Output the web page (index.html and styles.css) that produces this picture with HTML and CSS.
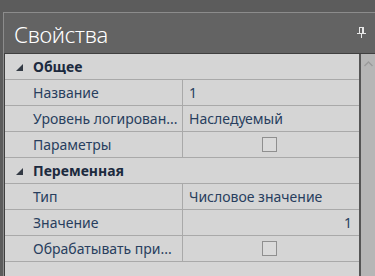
FILE: index.html
```html
<!DOCTYPE html>
<html lang="ru">
<head>
<meta charset="utf-8">
<link rel="stylesheet" href="styles.css">
</head>
<body>
<div class="panel">
  <div class="header">
    <span class="title">Свойства</span>
    <svg class="pin" width="9" height="11" viewBox="0 0 9 11">
      <rect x="2" y="0" width="5" height="1" fill="#e8e8e8"/>
      <rect x="2" y="1" width="1" height="5" fill="#e8e8e8"/>
      <rect x="5" y="1" width="2" height="5" fill="#e8e8e8"/>
      <rect x="0" y="6" width="9" height="1" fill="#e8e8e8"/>
      <rect x="4" y="7" width="1" height="4" fill="#e8e8e8"/>
    </svg>
  </div>
  <div class="body">
    <div class="grid">
      <div class="cat"><span class="tri"></span>Общее</div>
      <div class="row"><div class="name">Название</div><div class="val">1</div></div>
      <div class="row"><div class="name">Уровень логирован...</div><div class="val">Наследуемый</div></div>
      <div class="row"><div class="name">Параметры</div><div class="val center"><span class="chk"></span></div></div>
      <div class="cat"><span class="tri"></span>Переменная</div>
      <div class="row"><div class="name">Тип</div><div class="val">Числовое значение</div></div>
      <div class="row"><div class="name">Значение</div><div class="val right">1</div></div>
      <div class="row"><div class="name">Обрабатывать при...</div><div class="val center"><span class="chk"></span></div></div>
    </div>
    <div class="scroll">
      <svg class="up" width="9" height="6" viewBox="0 0 9 6"><path d="M0.5 5 L4.5 1 L8.5 5" fill="none" stroke="#9a9a9a" stroke-width="1.4"/></svg>
    </div>
  </div>
</div>
</body>
</html>
```
FILE: styles.css
```css
html, body {
  margin: 0;
  padding: 0;
  background: #5c5c5c;
  height: 276px;
  overflow: hidden;
}
.panel {
  margin: 12px 0 0 3px;
  border-top: 1px solid #8c8c8c;
  border-left: 1px solid #8c8c8c;
  background: #636363;
  height: 263px;
  display: flex;
  flex-direction: column;
  font-family: "Noto Sans", "Open Sans", sans-serif;
}
.header {
  height: 40px;
  display: flex;
  align-items: center;
  justify-content: space-between;
  padding: 0 9px 0 10px;
  border-bottom: 1px solid #404040;
}
.title {
  color: #ffffff;
  font-size: 22px;
  font-weight: 300;
  letter-spacing: -0.3px;
  margin-top: 2px;
}
.pin {
  display: block;
  margin-top: -1px;
}
.body {
  flex: 1;
  display: flex;
  border-left: 1px solid #3e3e3e;
}
.grid {
  flex: 1;
  background: #d5d5d5;
  border-right: 2px solid #555555;
}
.scroll {
  width: 14px;
  background: #b6b6b6;
  display: flex;
  justify-content: center;
}
.up {
  margin-top: 7px;
}
.cat {
  height: 25px;
  border-bottom: 1px solid #a9a9a9;
  display: flex;
  align-items: center;
  font-size: 14px;
  font-weight: 700;
  color: #1c2a3e;
  padding-left: 11px;
}
.tri {
  width: 0;
  height: 0;
  border-left: 7px solid transparent;
  border-bottom: 7px solid #333a44;
  margin-right: 10px;
  margin-top: 1px;
}
.row {
  height: 25px;
  border-bottom: 1px solid #a9a9a9;
  display: flex;
  font-size: 14px;
  color: #283e5e;
}
.name {
  width: 149px;
  padding-left: 28px;
  border-right: 1px solid #a9a9a9;
  display: flex;
  align-items: center;
  white-space: nowrap;
  overflow: hidden;
}
.val {
  flex: 1;
  padding-left: 6px;
  padding-right: 7px;
  display: flex;
  align-items: center;
  white-space: nowrap;
}
.val.center {
  justify-content: center;
}
.val.right {
  justify-content: flex-end;
}
.chk {
  width: 13px;
  height: 13px;
  border: 1px solid #8f8f8f;
  background: #dadada;
  margin-left: -2px;
}
```
